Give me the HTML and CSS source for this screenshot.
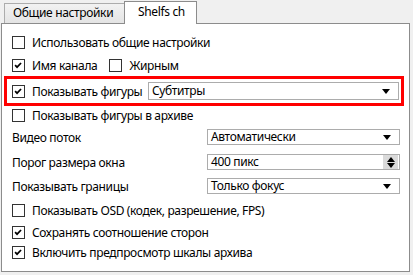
FILE: index.html
```html
<!DOCTYPE html>
<html lang="ru">
<head>
    <meta charset="UTF-8">
    <title>Shelfs ch</title>
    <link rel="stylesheet" href="styles.css">
</head>
<body>
    <div class="tabs">
        <div class="tab">Общие настройки</div>
        <div class="tab tab-active">Shelfs ch</div>
    </div>
    <div class="panel">
        <div class="row r1">
            <span class="check"></span>
            <span class="label">Использовать общие настройки</span>
        </div>
        <div class="row r2">
            <span class="check checked"><svg viewBox="0 0 13 13"><polyline points="2.5,6 4.8,8.5 9.5,3.5"/></svg></span>
            <span class="label">Имя канала</span>
            <span class="check second"></span>
            <span class="label">Жирным</span>
        </div>
        <div class="row r3 highlight">
            <span class="check checked"><svg viewBox="0 0 13 13"><polyline points="2.5,6 4.8,8.5 9.5,3.5"/></svg></span>
            <span class="label">Показывать фигуры</span>
            <div class="combo wide">
                <span>Субтитры</span>
                <span class="arrow"></span>
            </div>
        </div>
        <div class="row r4">
            <span class="check"></span>
            <span class="label">Показывать фигуры в архиве</span>
        </div>
        <div class="row r5">
            <span class="field-label">Видео поток</span>
            <div class="combo">
                <span>Автоматически</span>
                <span class="arrow"></span>
            </div>
        </div>
        <div class="row r6">
            <span class="field-label">Порог размера окна</span>
            <div class="combo spin">
                <span>400 пикс</span>
                <span class="spin-btn"><span class="up"></span><span class="down"></span></span>
            </div>
        </div>
        <div class="row r7">
            <span class="field-label">Показывать границы</span>
            <div class="combo">
                <span>Только фокус</span>
                <span class="arrow"></span>
            </div>
        </div>
        <div class="row r8">
            <span class="check"></span>
            <span class="label">Показывать OSD (кодек, разрешение, FPS)</span>
        </div>
        <div class="row r9">
            <span class="check checked"><svg viewBox="0 0 13 13"><polyline points="2.5,6 4.8,8.5 9.5,3.5"/></svg></span>
            <span class="label">Сохранять соотношение сторон</span>
        </div>
        <div class="row r10">
            <span class="check checked"><svg viewBox="0 0 13 13"><polyline points="2.5,6 4.8,8.5 9.5,3.5"/></svg></span>
            <span class="label">Включить предпросмотр шкалы архива</span>
        </div>
    </div>
</body>
</html>
```
FILE: styles.css
```css
body {
    margin: 0;
    background: #f0f0f0;
    font-family: "Noto Sans", sans-serif;
    font-size: 12px;
    letter-spacing: -0.35px;
    color: #000;
}
.tabs {
    display: flex;
    align-items: flex-end;
    height: 23px;
    padding-left: 4px;
}
.tab {
    width: 121px;
    height: 20px;
    box-sizing: border-box;
    padding-left: 8px;
    border: 1px solid #acacac;
    border-bottom: none;
    background: linear-gradient(#f2f2f2, #e4e4e4);
    line-height: 18px;
    white-space: nowrap;
}
.tab-active {
    position: relative;
    z-index: 1;
    width: 73px;
    height: 23px;
    margin-bottom: -1px;
    margin-left: -1px;
    padding-left: 13px;
    border-color: #8c8c8c;
    background: #fff;
    line-height: 20px;
}
.panel {
    margin-left: 1px;
    width: 409px;
    height: 249px;
    box-sizing: border-box;
    border: 1px solid #8c8c8c;
    background: #fff;
    padding-top: 6px;
}
.row {
    display: flex;
    align-items: center;
    padding-left: 10px;
    white-space: nowrap;
}
.r1 { height: 24px; }
.r2 { height: 22px; }
.r3 { height: 24px; }
.r4 { height: 18px; }
.r5 { height: 26px; }
.r6 { height: 24px; }
.r7 { height: 24px; }
.r8 { height: 24px; }
.r9 { height: 20px; }
.r10 { height: 20px; }
.highlight {
    margin: 0 5px 0 2px;
    padding-left: 5px;
    border: 3px solid #f00;
}
.check {
    width: 13px;
    height: 13px;
    box-sizing: border-box;
    border: 1px solid #333;
    background: #fff;
    margin-right: 7px;
    flex: none;
}
.check svg {
    display: block;
    width: 11px;
    height: 11px;
}
.check polyline {
    fill: none;
    stroke: #000;
    stroke-width: 2;
}
.check.second {
    margin-left: 12px;
}
.field-label {
    width: 195px;
    flex: none;
}
.combo {
    width: 193px;
    height: 16px;
    box-sizing: border-box;
    border: 1px solid #acacac;
    background: #fff;
    display: flex;
    align-items: center;
    justify-content: space-between;
    padding: 0 8px 0 3px;
    line-height: 14px;
    flex: none;
}
.combo.wide {
    width: 251px;
    height: 18px;
    margin-left: auto;
    margin-right: 2px;
}
.arrow {
    width: 0;
    height: 0;
    border-left: 4px solid transparent;
    border-right: 4px solid transparent;
    border-top: 5px solid #000;
}
.combo.spin {
    padding-right: 1px;
}
.spin-btn {
    width: 15px;
    height: 14px;
    background: #dadada;
    display: flex;
    flex-direction: column;
    align-items: center;
    justify-content: center;
    gap: 1px;
}
.spin-btn .up {
    width: 0;
    height: 0;
    border-left: 4px solid transparent;
    border-right: 4px solid transparent;
    border-bottom: 5px solid #000;
}
.spin-btn .down {
    width: 0;
    height: 0;
    border-left: 4px solid transparent;
    border-right: 4px solid transparent;
    border-top: 5px solid #000;
}
```
